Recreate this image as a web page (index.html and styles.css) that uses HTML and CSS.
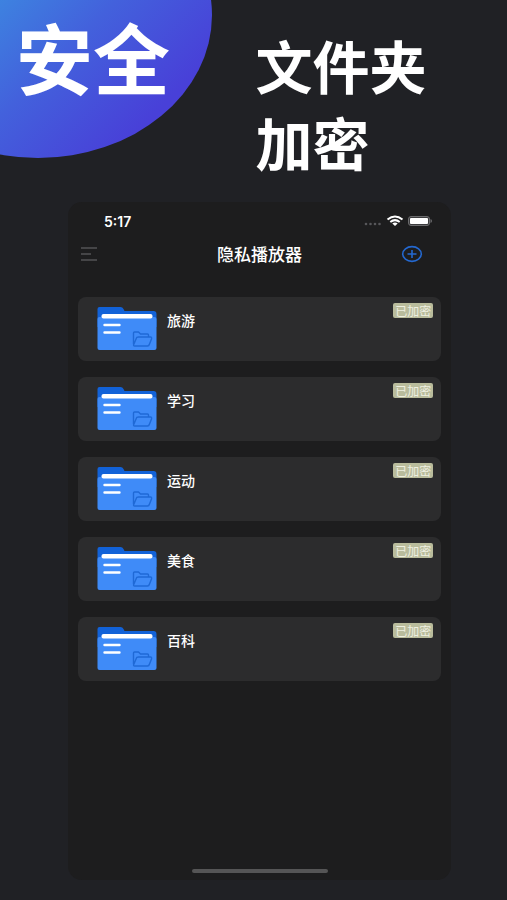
FILE: index.html
```html
<!DOCTYPE html>
<html lang="zh-CN">
<head>
<meta charset="utf-8">
<meta name="viewport" content="width=device-width, initial-scale=1">
<title>隐私播放器</title>
<link rel="stylesheet" href="styles.css">
</head>
<body>
<svg class="defs" aria-hidden="true">
  <symbol id="folder" viewBox="0 0 60 44">
    <path fill="#1262d8" d="M1 2Q1 0 3 0H24Q26 0 27 2L28 4H57Q60 4 60 7V20H1Z"/>
    <path fill="#3f8bf8" d="M1 12Q1 10 3 10H58Q60 10 60 12V41Q60 43 58 43H3Q1 43 1 41Z"/>
    <rect x="5" y="7" width="51" height="4.500" rx="2" fill="#fff"/>
    <path stroke="#fff" stroke-width="2.400" stroke-linecap="round" d="M8 18H23M8 25.500H23"/>
    <path fill="none" stroke="#1f69d6" stroke-width="1.400" stroke-linejoin="round" d="M37 37V26Q37 25 38 25H42L44 27H51Q52 27 52 28V30M37 38L40 31Q40 30 42 30H54Q55.500 30 55 32L53 37Q52.500 39 51 39H38Q37 39 37 38Z"/>
  </symbol>
</svg>
<header class="hero">
  <div class="blob"></div>
  <h1 class="hero-title">安全</h1>
  <p class="hero-text">文件夹<br>加密</p>
</header>
<main class="phone">
  <div class="status">
    <span class="time">5:17</span>
    <svg class="status-icons" width="70" height="14" viewBox="0 0 70 14" aria-hidden="true">
      <g fill="#57575a"><circle cx="3" cy="10" r="1.300"/><circle cx="7.500" cy="10" r="1.300"/><circle cx="12" cy="10" r="1.300"/><circle cx="16.500" cy="10" r="1.300"/></g>
      <path fill="none" stroke="#fff" stroke-width="2" d="M24.500 5.500Q32 -0.500 39.500 5.500M27.300 8Q32 4.300 36.700 8"/>
      <path fill="#fff" d="M29.300 9.500Q32 7.500 34.700 9.500L32 12Z"/>
      <rect x="45.500" y="2.500" width="21" height="9" rx="2.500" fill="#3c3c3e" stroke="#6c6c6e"/>
      <rect x="47" y="4" width="18" height="6" rx="1" fill="#fff"/>
      <path fill="#6c6c6e" d="M67.500 5Q69 5.500 69 7T67.500 9Z"/>
    </svg>
  </div>
  <nav class="navbar">
    <button class="icon-button" type="button" aria-label="菜单">
      <svg width="18" height="16" viewBox="0 0 18 16"><path stroke="#454547" stroke-width="1.800" d="M1 2H17M1 8H11M1 14H17"/></svg>
    </button>
    <h2 class="title">隐私播放器</h2>
    <button class="icon-button add" type="button" aria-label="新建">
      <svg width="22" height="18" viewBox="0 0 22 18"><g fill="none" stroke="#2468cf" stroke-width="1.600"><ellipse cx="11" cy="9" rx="9.300" ry="7.400"/><path d="M6.500 9H15.500M11 5V13"/></g></svg>
    </button>
  </nav>
  <ul class="list">
    <li class="card"><svg class="folder"><use href="#folder"/></svg><span class="name">旅游</span><span class="badge">已加密</span></li>
    <li class="card"><svg class="folder"><use href="#folder"/></svg><span class="name">学习</span><span class="badge">已加密</span></li>
    <li class="card"><svg class="folder"><use href="#folder"/></svg><span class="name">运动</span><span class="badge">已加密</span></li>
    <li class="card"><svg class="folder"><use href="#folder"/></svg><span class="name">美食</span><span class="badge">已加密</span></li>
    <li class="card"><svg class="folder"><use href="#folder"/></svg><span class="name">百科</span><span class="badge">已加密</span></li>
  </ul>
  <div class="home-bar"></div>
</main>
</body>
</html>
```
FILE: styles.css
```css
* {
  box-sizing: border-box;
  margin: 0;
  padding: 0;
}

body {
  display: flex;
  flex-direction: column;
  min-height: 100vh;
  background: #202125;
  color: #fff;
  font-family: "Noto Sans CJK SC", sans-serif;
}

.defs {
  position: absolute;
  width: 0;
  height: 0;
}

.hero {
  position: relative;
  display: grid;
  grid-template-columns: 1fr 1fr;
  align-items: start;
  height: 202px;
  overflow: hidden;
}

.blob {
  position: absolute;
  left: -136px;
  top: -128px;
  width: 348px;
  height: 286px;
  border-radius: 50%;
  background: linear-gradient(135deg, #3d85e0 40%, #4361dc 60%, #4840d8 84%);
}

.hero-title {
  position: relative;
  padding: 8px 0 0 16px;
  font-size: 77px;
  line-height: 96px;
  font-weight: 700;
}

.hero-text {
  padding: 26px 0 0 2px;
  font-size: 57px;
  line-height: 77px;
  font-weight: 700;
  white-space: nowrap;
}

.phone {
  flex: 1;
  display: flex;
  flex-direction: column;
  margin: 0 11% 20px 68px;
  padding: 10px 10px 7px 10px;
  border-radius: 14px;
  background: #1d1d1e;
}

.status {
  display: flex;
  align-items: center;
  justify-content: space-between;
  height: 18px;
  padding: 0 8px 0 26px;
}

.time {
  font-family: Inter, sans-serif;
  font-size: 14px;
  font-weight: 600;
}

.navbar {
  display: grid;
  grid-template-columns: 1fr auto 1fr;
  align-items: center;
  height: 48px;
  padding: 0 2px;
}

.icon-button {
  display: flex;
  justify-self: start;
  border: 0;
  background: none;
}

.add {
  justify-self: end;
  margin-right: 16px;
}

.title {
  font-size: 17px;
  line-height: 24px;
  font-weight: 500;
}

.list {
  flex: 1;
  display: flex;
  flex-direction: column;
  gap: 16px;
  padding-top: 19px;
  list-style: none;
}

.card {
  display: flex;
  align-items: flex-start;
  height: 64px;
  padding: 6px 8px 0 18px;
  border-radius: 8px;
  background: #2c2c2d;
}

.folder {
  width: 61px;
  height: 44px;
  margin-top: 4px;
}

.name {
  margin: 7px auto 0 10px;
  font-size: 14px;
  line-height: 20px;
  font-weight: 500;
}

.badge {
  padding: 0 2px;
  border-radius: 2px;
  background: #b9bc9c;
  color: #eeefe0;
  font-size: 12px;
  line-height: 15px;
}

.home-bar {
  align-self: center;
  width: 136px;
  height: 4px;
  border-radius: 2px;
  background: #555556;
}
```
